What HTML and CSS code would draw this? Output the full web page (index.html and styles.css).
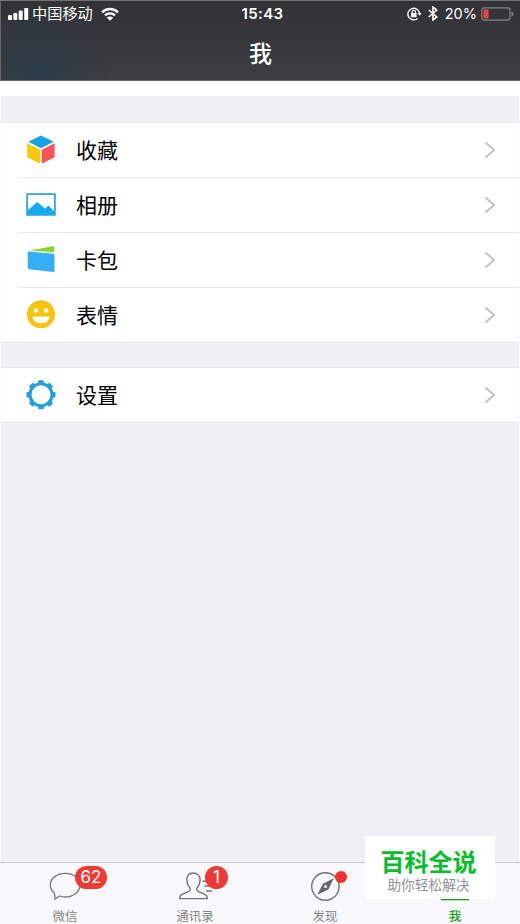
FILE: index.html
```html
<!DOCTYPE html>
<html lang="zh-CN">
<head>
<meta charset="utf-8">
<title>我</title>
<link rel="stylesheet" href="styles.css">
</head>
<body>
<div class="phone">
  <header class="header">
    <div class="status">
      <div class="status-left">
        <svg class="signal" width="21" height="14" viewBox="0 0 21 14" fill="#fff"><rect x="0" y="8" width="4" height="5" rx="1"/><rect x="5.3" y="6" width="4" height="7" rx="1"/><rect x="10.700" y="3.5" width="4" height="9.5" rx="1"/><rect x="16.200" y="1" width="4" height="12" rx="1"/></svg>
        <span class="carrier">中国移动</span>
        <svg class="wifi" width="18" height="14" viewBox="0 0 18 14" fill="none" stroke="#fff" stroke-width="2.4"><path d="M1 5.3a11.4 11.4 0 0 1 16 0M4 8.4a7.2 7.2 0 0 1 10 0"/><path d="M5.8 10.8a4.6 4.6 0 0 1 6.4 0L9 13.8z" fill="#fff" stroke="none"/></svg>
      </div>
      <div class="clock">15:43</div>
      <div class="status-right">
        <svg width="15" height="14" viewBox="0 0 15 14" fill="none" stroke="#fff" stroke-width="1.4"><path d="M12.500 6.500A5.800 5.800 0 1 0 10.500 11.500"/><path d="M10.500 6h4.200l-2.100 2.800z" fill="#fff" stroke="none"/><rect x="4" y="6" width="5.6" height="4.200" fill="#fff" stroke="none"/><path d="M5.1 6V5a1.700 1.700 0 0 1 3.400 0v1" stroke-width="1.200"/></svg>
        <svg class="bluetooth" width="10" height="15" viewBox="0 0 10 15" fill="none" stroke="#fff" stroke-width="1.6"><path d="M.8 4l8 7L5 14V1l3.8 3-8 7"/></svg>
        <span class="percent">20%</span>
        <svg class="battery" width="33" height="14" viewBox="0 0 33 14"><rect x=".8" y=".8" width="28.2" height="12.4" rx="2.5" fill="none" stroke="#858588" stroke-width="1.2"/><rect x="2.5" y="2.5" width="5" height="9" rx=".8" fill="#f04540"/><path d="M30.5 4.5q2 .7 2 2.5t-2 2.5z" fill="#858588"/></svg>
      </div>
    </div>
    <h1 class="title">我</h1>
  </header>
  <div class="profile-edge"></div>
  <main class="content">
    <section class="group">
      <div class="row"><svg class="icon" width="30" height="30" viewBox="0 0 30 30"><path d="M15 .4L27.600 6.800 15 13.2 2.400 6.800z" fill="#18a2e6"/><path d="M1.200 8.200l13.100 6.600v14L1.200 22.2z" fill="#fac907"/><path d="M28.600 8.200l-12.900 6.600v14l12.900-6.600z" fill="#fb5358"/></svg><span class="label">收藏</span><svg class="arrow" width="12" height="18" viewBox="0 0 12 18"><path d="M1.5 1.5L10 9l-8.5 7.5"/></svg></div>
      <div class="row"><svg class="icon" width="30" height="30" viewBox="0 0 30 30"><rect x="1.1" y="4.1" width="27.8" height="20.8" fill="#fff" stroke="#27a2df" stroke-width="1.7"/><path d="M1.500 20.500L11.200 12l8 6.800 3.1-3.300 6.2 6.300v2.600h-27z" fill="#13aaf0"/></svg><span class="label">相册</span><svg class="arrow" width="12" height="18" viewBox="0 0 12 18"><path d="M1.5 1.5L10 9l-8.5 7.5"/></svg></div>
      <div class="row"><svg class="icon" width="30" height="30" viewBox="0 0 30 30"><path d="M3.5 5.600L27 1.200q1.200-.2 1.200 1v5z" fill="#86d82c"/><path d="M3 6.500l24.500 2.2q1 .1 1 1v16q0 1.3-1.2 1.200L3 24.300q-1.300-.1-1.300-1.300V8Q1.700 6.500 3 6.500z" fill="#35aff4"/></svg><span class="label">卡包</span><svg class="arrow" width="12" height="18" viewBox="0 0 12 18"><path d="M1.5 1.5L10 9l-8.5 7.5"/></svg></div>
      <div class="row"><svg class="icon" width="30" height="30" viewBox="0 0 30 30"><circle cx="15" cy="14.3" r="14" fill="#f8c30d"/><circle cx="9.8" cy="10.5" r="2.2" fill="#fff"/><circle cx="20.2" cy="10.5" r="2.2" fill="#fff"/><path d="M6.5 16.5h17q-.5 6.8-8.5 6.8t-8.5-6.8z" fill="#fff"/></svg><span class="label">表情</span><svg class="arrow" width="12" height="18" viewBox="0 0 12 18"><path d="M1.5 1.5L10 9l-8.5 7.5"/></svg></div>
    </section>
    <section class="group settings">
      <div class="row"><svg class="icon" width="30" height="30" viewBox="0 0 30 30"><g fill="#1f9fde"><rect x="12.2" y=".2" width="5.6" height="29" rx="1"/><rect x="12.2" y=".2" width="5.6" height="29" rx="1" transform="rotate(45 15 14.7)"/><rect x="12.2" y=".2" width="5.6" height="29" rx="1" transform="rotate(90 15 14.7)"/><rect x="12.2" y=".2" width="5.6" height="29" rx="1" transform="rotate(135 15 14.7)"/></g><circle cx="15" cy="14.7" r="11" fill="#fff" stroke="#1f9fde" stroke-width="3"/></svg><span class="label">设置</span><svg class="arrow" width="12" height="18" viewBox="0 0 12 18"><path d="M1.5 1.5L10 9l-8.5 7.5"/></svg></div>
    </section>
  </main>
  <nav class="tabs">
    <div class="tab"><svg width="34" height="32" viewBox="0 0 34 32" fill="none" stroke="#77777a" stroke-width="1.3"><path d="M6.5 24.3C3.7 22 2.3 19.2 2.3 16 2.3 9.3 9 4.3 17.3 4.3S32 9.3 32 16s-6.500 12-14.700 12c-2.100 0-4-.4-5.800-1L7 30z"/></svg><span class="tab-name">微信</span><b class="badge wide">62</b></div>
    <div class="tab"><svg width="34" height="32" viewBox="0 0 34 32" fill="none" stroke="#737376" stroke-width="1.4"><path d="M15 4c-4 0-6.200 2.800-6.200 6.800 0 3.300 1 5.600 2.800 7.700 1.200 1.500.6 3.400-1.300 4.200L4 25.300C2.400 26 1.700 27 1.700 29.600h27.600c0-2.600-.8-3.700-2.400-4.300l-6.300-2.600c-1.900-.8-2.500-2.700-1.300-4.200 1.900-2.100 2.800-4.400 2.800-7.700C22.100 6.800 19.400 4 15 4zM24.500 12.300h7M26.500 17h6M28 22h6"/></svg><span class="tab-name">通讯录</span><b class="badge one">1</b></div>
    <div class="tab"><svg width="34" height="32" viewBox="0 0 34 32"><circle cx="17.400" cy="17.500" r="13.700" fill="none" stroke="#737376" stroke-width="1.400"/><path d="M25.800 9.300l-5.400 11.100-11 5.300 5.500-11z" fill="#69696c"/><circle cx="17.500" cy="17.500" r="1.500" fill="#f8f8fa"/></svg><span class="tab-name">发现</span><b class="dot"></b></div>
    <div class="tab active"><svg width="34" height="38" viewBox="0 0 34 38"><path d="M3 36.500h28" stroke="#159d1a" stroke-width="1.500"/></svg><span class="tab-name">我</span></div>
  </nav>
  <aside class="watermark"><strong>百科全说</strong><span>助你轻松解决</span></aside>
</div>
</body>
</html>
```
FILE: styles.css
```css
* { box-sizing: border-box; }
body {
  margin: 0;
  font-family: "Liberation Sans", "Noto Sans CJK SC", sans-serif;
}
svg { display: block; flex: none; }
.phone {
  position: relative;
  display: flex;
  flex-direction: column;
  width: 520px;
  height: 924px;
  overflow: hidden;
  background: #efeff4;
}
.header {
  height: 81px;
  flex: none;
  color: #fff;
  border-top: 1px solid #737375;
  border-left: 1px solid #68686b;
  border-bottom: 1px solid #69696c;
  background: radial-gradient(ellipse 75px 65px at 38px 70px, rgba(39, 61, 77, .75), transparent), linear-gradient(#313136, #3e3d42);
}
.status {
  display: grid;
  grid-template-columns: 1fr 60px 1fr;
  align-items: center;
  height: 24px;
  padding: 0 6px 0 7px;
}
.status-left, .status-right { display: flex; align-items: center; }
.status-right { justify-content: flex-end; }
.carrier {
  margin-left: 3px;
  font-size: 15.2px;
  line-height: 24px;
  padding-top: 1px;
}
.wifi { margin-left: 8px; }
.clock {
  font: 600 15px/24px Inter, sans-serif;
  letter-spacing: .4px;
  padding: 1px 0 0 3px;
  white-space: nowrap;
  text-align: center;
}
.bluetooth { margin-left: 6px; }
.percent {
  margin: 0 4px 0 7px;
  padding-top: 1px;
  font: 14.5px/24px Inter, sans-serif;
}
.title {
  margin: 11px 0 0;
  font-size: 23px;
  font-weight: 500;
  line-height: 36px;
  text-align: center;
}
.profile-edge {
  height: 16px;
  flex: none;
  background: #fff;
  border-bottom: 1px solid #efeff2;
}
.content {
  flex: 1;
  padding-top: 25px;
  border-left: 1px solid #fafafc;
  border-right: 1px solid #fafafc;
}
.group {
  background: #fff;
  border-top: 1px solid #e9e9ec;
  border-bottom: 1px solid #e6e6e9;
}
.settings { margin-top: 24px; }
.row {
  display: flex;
  align-items: center;
  height: 55px;
  margin-left: 17px;
  padding: 0 23px 0 8px;
}
.row:first-child { height: 54px; }
.row + .row { border-top: 1px solid #e9e9eb; }
.label {
  flex: 1;
  margin-left: 20px;
  padding-top: 2px;
  color: #000;
  font-size: 21px;
  line-height: 32px;
}
.row:first-child .label { padding-top: 1px; }
.settings .row:first-child .label { padding-top: 2px; }
.arrow {
  fill: none;
  stroke: #c2c2c5;
  stroke-width: 2;
}
.tabs {
  display: grid;
  grid-template-columns: repeat(4, 1fr);
  height: 62px;
  flex: none;
  border-top: 1px solid #c9c9cd;
  background: #f8f8fa;
}
.tab {
  position: relative;
  display: flex;
  flex-direction: column;
  align-items: center;
  padding-top: 6px;
  color: #858589;
}
.tab-name {
  margin-top: 7px;
  font-size: 12.5px;
  line-height: 18px;
}
.active { padding-top: 0; color: #159d1a; }
.active .tab-name { font-weight: 500; }
.badge {
  position: absolute;
  top: 3px;
  height: 23px;
  border-radius: 12px;
  background: #ee3a34;
  color: #fff;
  font: 17px/23px Inter, sans-serif;
  text-align: center;
}
.wide { left: 75px; width: 32px; }
.one { left: 75px; width: 23px; }
.dot {
  position: absolute;
  left: 75px;
  top: 8px;
  width: 12px;
  height: 12px;
  border-radius: 50%;
  background: #f0302e;
}
.watermark {
  position: absolute;
  left: 365px;
  top: 836px;
  width: 130px;
  height: 63px;
  display: flex;
  flex-direction: column;
  align-items: center;
  padding: 12px 3px 0 0;
  background: #fff;
}
.watermark strong {
  color: #08bd2c;
  font-size: 24px;
  line-height: 29px;
}
.watermark span {
  color: #929295;
  font-size: 13.700px;
  line-height: 18px;
}
```
